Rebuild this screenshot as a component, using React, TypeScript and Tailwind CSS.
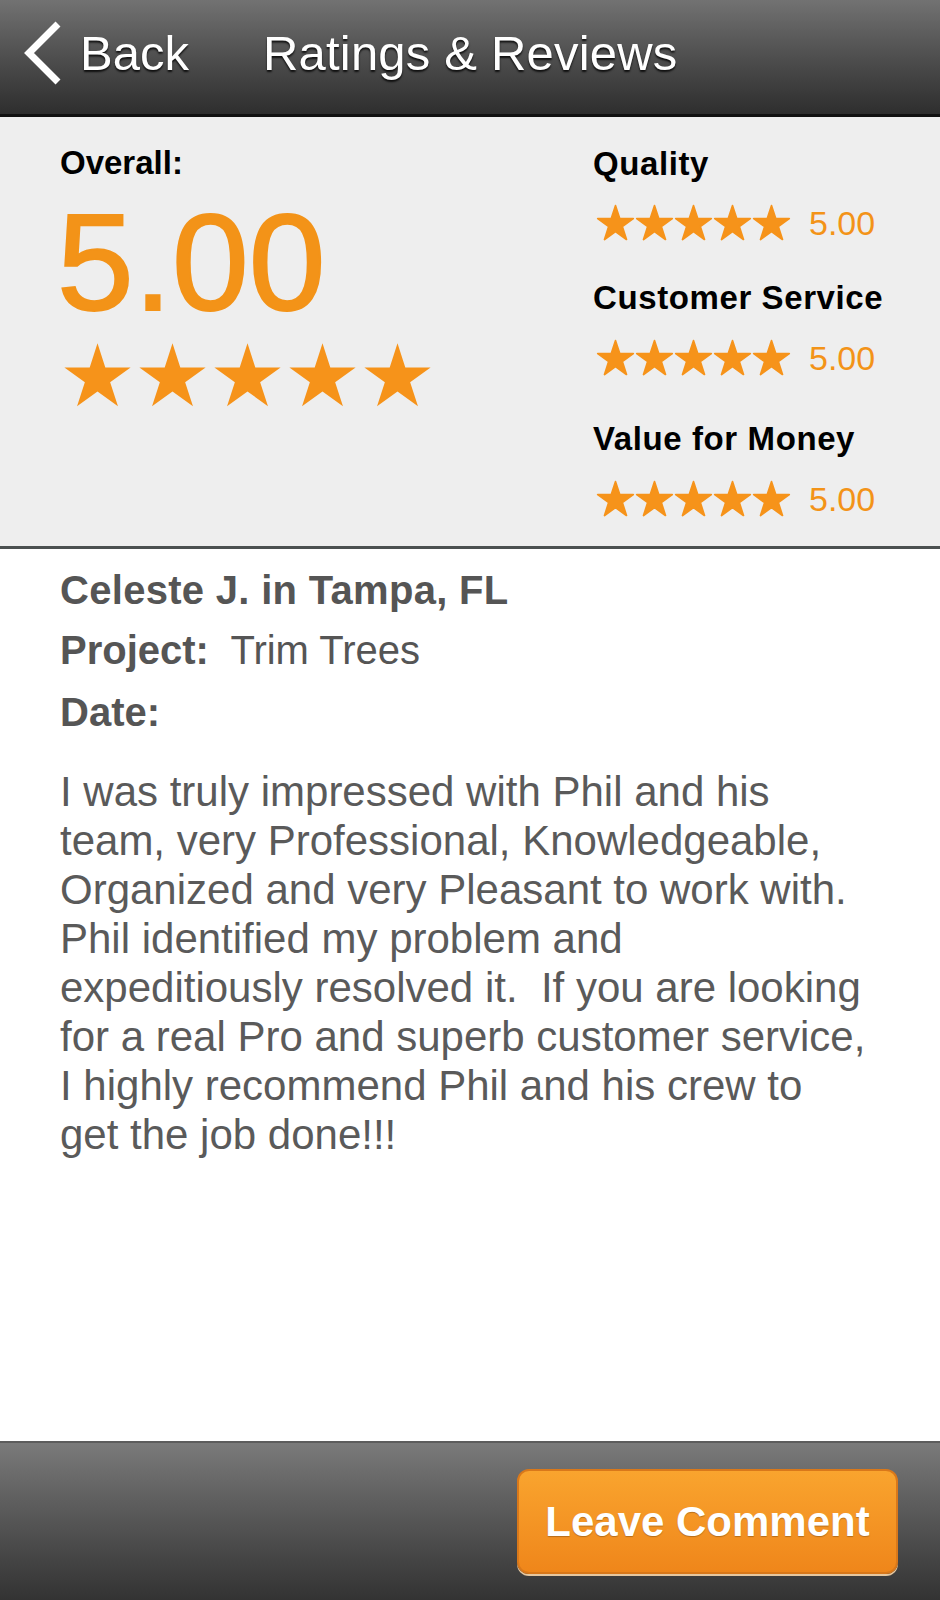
import React from "react";

function Star({ w, fat }: { w: number; fat?: boolean }) {
  return (
    <svg width={w} height={w * 0.951} viewBox="-2 -2 104 99.1" overflow="visible">
      <polygon
        points="50,0 61.8,36.33 100,36.33 69.1,58.78 80.9,95.1 50,72.66 19.1,95.1 30.9,58.78 0,36.33 38.2,36.33"
        fill="#f6931a"
        stroke={fat ? "#f6931a" : "none"}
        strokeWidth={fat ? 5 : 0}
        strokeLinejoin="round"
      />
    </svg>
  );
}

function StarRow({ w, gap, fat }: { w: number; gap: string; fat?: boolean }) {
  return (
    <div className={`flex items-center ${gap}`}>
      {[0, 1, 2, 3, 4].map((i) => (
        <Star key={i} w={w} fat={fat} />
      ))}
    </div>
  );
}

const reviewLines = [
  "I was truly impressed with Phil and his",
  "team, very Professional, Knowledgeable,",
  "Organized and very Pleasant to work with.",
  "Phil identified my problem and",
  "expeditiously resolved it.  If you are looking",
  "for a real Pro and superb customer service,",
  "I highly recommend Phil and his crew to",
  "get the job done!!!",
];

export default function App() {
  return (
    <div className="w-[940px] h-[1600px] flex flex-col bg-white font-['Liberation_Sans',Arial,sans-serif] overflow-hidden">
      {/* Header */}
      <div className="h-[117px] shrink-0 flex items-center pb-[8px] bg-gradient-to-b from-[#727272] to-[#2e2e2e] border-b-[3px] border-[#111111] text-white [text-shadow:0_2px_2px_rgba(0,0,0,0.8)]">
        <svg width="44" height="66" viewBox="0 0 44 66" className="ml-[20px] shrink-0">
          <path d="M38 4 L9 33 L38 62" fill="none" stroke="#ffffff" strokeWidth="7" strokeLinejoin="miter" />
        </svg>
        <span className="ml-[16px] text-[49px] leading-none">Back</span>
        <span className="ml-[74px] text-[49px] leading-none tracking-[0.2px]">Ratings &amp; Reviews</span>
      </div>

      {/* Ratings */}
      <div className="h-[432px] shrink-0 flex bg-[#eeeeee] border-b-[3px] border-[#4b5050]">
        <div className="w-[593px] shrink-0 pl-[60px] pt-[26px] flex flex-col">
          <div className="text-[33px] font-bold leading-[40px] text-black">Overall:</div>
          <div className="mt-[10px] ml-[-3px] text-[138px] leading-[138px] text-[#f39318] [-webkit-text-stroke:2px_#f39318]">5.00</div>
          <div className="mt-[11px] ml-[3px]">
            <StarRow w={69} gap="gap-[6px]" />
          </div>
        </div>
        <div className="pt-[27px] flex flex-col">
          <div className="text-[33px] font-bold leading-[40px] text-black tracking-[0.6px]">Quality</div>
          <div className="mt-[19px] h-[40px] flex items-center ml-[4px]">
            <StarRow w={37} gap="gap-[2px]" fat />
            <span className="ml-[19px] text-[34px] leading-[40px] text-[#f39318]">5.00</span>
          </div>
          <div className="mt-[35px] text-[33px] font-bold leading-[40px] text-black tracking-[0.6px]">Customer Service</div>
          <div className="mt-[20px] h-[40px] flex items-center ml-[4px]">
            <StarRow w={37} gap="gap-[2px]" fat />
            <span className="ml-[19px] text-[34px] leading-[40px] text-[#f39318]">5.00</span>
          </div>
          <div className="mt-[41px] text-[33px] font-bold leading-[40px] text-black tracking-[0.6px]">Value for Money</div>
          <div className="mt-[20px] h-[40px] flex items-center ml-[4px]">
            <StarRow w={37} gap="gap-[2px]" fat />
            <span className="ml-[19px] text-[34px] leading-[40px] text-[#f39318]">5.00</span>
          </div>
        </div>
      </div>

      {/* Review */}
      <div className="flex-1 pl-[60px] pt-[11px] text-[#555555]">
        <div className="text-[40px] font-bold leading-[60px] tracking-[0.3px]">Celeste J. in Tampa, FL</div>
        <div className="text-[40px] leading-[60px] whitespace-pre">
          <span className="font-bold">Project:</span>  Trim Trees
        </div>
        <div className="mt-[2px] text-[40px] font-bold leading-[60px]">Date:</div>
        <div className="mt-[25px] text-[42px] leading-[49px] text-[#5a5a5a]">
          {reviewLines.map((l, i) => (
            <div key={i} className="whitespace-pre">
              {l}
            </div>
          ))}
        </div>
      </div>

      {/* Bottom bar */}
      <div className="h-[159px] shrink-0 flex items-center justify-end pr-[42px] bg-gradient-to-b from-[#7a7a7a] to-[#333333] border-t-[2px] border-[#5c5c5c]">
        <button className="w-[381px] h-[105px] rounded-[12px] bg-gradient-to-b from-[#f9a42e] to-[#ef861a] border-[2px] border-[#d9781a] shadow-[0_2px_0_#e6c79f] text-white font-bold text-[42px] leading-none [text-shadow:0_1px_1px_rgba(0,0,0,0.25)]">
          Leave Comment
        </button>
      </div>
    </div>
  );
}
